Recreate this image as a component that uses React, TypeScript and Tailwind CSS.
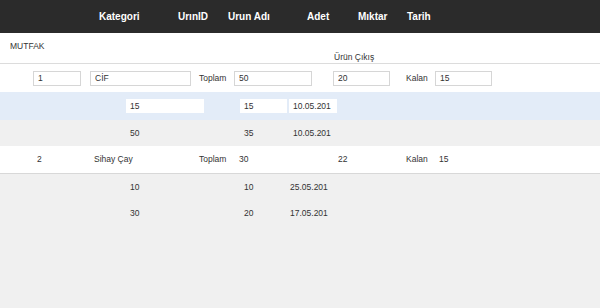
export default function App() {
  const headers = [
    { label: "Kategori", w: "w-[79px]" },
    { label: "UrınID", w: "w-[50px]" },
    { label: "Urun Adı", w: "w-[79px]" },
    { label: "Adet", w: "w-[51px]" },
    { label: "Mıktar", w: "w-[49px]" },
    { label: "Tarih", w: "w-[50px]" },
  ];

  const inputCls =
    "h-[15px] shrink-0 border border-[#d6d6d6] bg-white pl-[4px] text-[8.5px] leading-[13px] text-[#333] outline-none";
  const plainInput =
    "h-[14px] shrink-0 bg-white pl-[4px] text-[8.5px] leading-[14px] text-[#333] outline-none";

  return (
    <div
      className="h-[308px] w-[600px] overflow-hidden bg-[#f0f0f0] text-[8.5px] text-[#333]"
      style={{ fontFamily: '"Liberation Sans", Arial, sans-serif' }}
    >
      {/* header */}
      <div className="flex h-[33px] items-center bg-[#2b2b2b] pl-[99px] text-[10px] font-bold text-white">
        {headers.map((h) => (
          <span key={h.label} className={`${h.w} shrink-0`}>
            {h.label}
          </span>
        ))}
      </div>

      {/* category block */}
      <div className="h-[31px] border-b border-[#dcdcdc] bg-white pt-[8px]">
        <div className="pl-[10px] leading-[10px]">MUTFAK</div>
        <div className="mt-[1px] pl-[334px] leading-[10px]">Ürün Çıkış</div>
      </div>

      {/* product row 1 */}
      <div className="flex h-[28px] items-center bg-white">
        <input readOnly value="1" className={`${inputCls} ml-[33px] w-[48px]`} />
        <input readOnly value="CİF" className={`${inputCls} ml-[9px] w-[101px]`} />
        <span className="ml-[8px] w-[35px] shrink-0">Toplam</span>
        <input readOnly value="50" className={`${inputCls} w-[78px]`} />
        <input readOnly value="20" className={`${inputCls} ml-[21px] w-[57px]`} />
        <span className="ml-[16px] w-[29px] shrink-0">Kalan</span>
        <input readOnly value="15" className={`${inputCls} w-[57px]`} />
      </div>

      {/* edit row */}
      <div className="flex h-[28px] items-center bg-[#e3ecf8]">
        <input readOnly value="15" className={`${plainInput} ml-[126px] w-[78px]`} />
        <input readOnly value="15" className={`${plainInput} ml-[36px] w-[47px]`} />
        <input readOnly value="10.05.201" className={`${plainInput} ml-[2px] w-[48px]`} />
      </div>

      <div className="flex h-[26px] items-center bg-[#f0f0f0]">
        <span className="ml-[130px] w-[114px] shrink-0">50</span>
        <span className="w-[49px] shrink-0">35</span>
        <span>10.05.201</span>
      </div>

      {/* product row 2 */}
      <div className="flex h-[28px] items-center border-b border-[#d8d8d8] bg-white">
        <span className="ml-[37px] w-[57px] shrink-0">2</span>
        <span className="w-[105px] shrink-0">Sihay Çay</span>
        <span className="w-[40px] shrink-0">Toplam</span>
        <span className="w-[99px] shrink-0">30</span>
        <span className="w-[68px] shrink-0">22</span>
        <span className="w-[33px] shrink-0">Kalan</span>
        <span>15</span>
      </div>

      {[
        ["10", "10", "25.05.201"],
        ["30", "20", "17.05.201"],
      ].map((r) => (
        <div key={r[2]} className="flex h-[26px] items-center">
          <span className="ml-[130px] w-[114px] shrink-0">{r[0]}</span>
          <span className="w-[46px] shrink-0">{r[1]}</span>
          <span>{r[2]}</span>
        </div>
      ))}
    </div>
  );
}
